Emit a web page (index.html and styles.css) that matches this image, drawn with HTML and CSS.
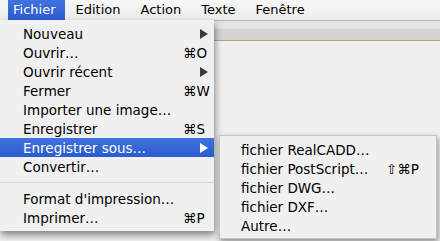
FILE: index.html
```html
<!DOCTYPE html>
<html lang="fr">
<head>
    <meta charset="UTF-8">
    <title>Fichier</title>
    <link rel="stylesheet" href="styles.css">
</head>
<body>
    <div class="menubar">
        <span class="title open">Fichier</span>
        <span class="title">Edition</span>
        <span class="title">Action</span>
        <span class="title">Texte</span>
        <span class="title">Fenêtre</span>
    </div>

    <div class="window">
        <div class="window-bar"></div>
        <div class="window-body"></div>
    </div>

    <div class="menu">
        <div class="item"><span class="label">Nouveau</span><span class="key arrow"><svg width="8" height="10" viewBox="0 0 8 10"><polygon points="0,0 8,5 0,10"/></svg></span></div>
        <div class="item"><span class="label">Ouvrir…</span><span class="key">⌘O</span></div>
        <div class="item"><span class="label">Ouvrir récent</span><span class="key arrow"><svg width="8" height="10" viewBox="0 0 8 10"><polygon points="0,0 8,5 0,10"/></svg></span></div>
        <div class="item"><span class="label">Fermer</span><span class="key">⌘W</span></div>
        <div class="item"><span class="label">Importer une image…</span><span class="key"></span></div>
        <div class="item"><span class="label">Enregistrer</span><span class="key">⌘S</span></div>
        <div class="item active"><span class="label">Enregistrer sous…</span><span class="key arrow"><svg width="8" height="10" viewBox="0 0 8 10"><polygon points="0,0 8,5 0,10"/></svg></span></div>
        <div class="item"><span class="label">Convertir…</span><span class="key"></span></div>
        <div class="sep"></div>
        <div class="item"><span class="label">Format d'impression…</span><span class="key"></span></div>
        <div class="item"><span class="label">Imprimer…</span><span class="key">⌘P</span></div>
    </div>

    <div class="menu submenu">
        <div class="item"><span class="label">fichier RealCADD…</span><span class="key"></span></div>
        <div class="item"><span class="label">fichier PostScript…</span><span class="key">⇧⌘P</span></div>
        <div class="item"><span class="label">fichier DWG…</span><span class="key"></span></div>
        <div class="item"><span class="label">fichier DXF…</span><span class="key"></span></div>
        <div class="item"><span class="label">Autre…</span><span class="key"></span></div>
    </div>
</body>
</html>
```

FILE: styles.css
```css
body {
    margin: 0;
    width: 440px;
    height: 241px;
    overflow: hidden;
    position: relative;
    background-color: #efefef;
    font-family: "DejaVu Sans", sans-serif;
    font-size: 13.5px;
    color: #000;
}

.menubar {
    height: 20px;
    display: flex;
    padding-left: 8px;
    font-size: 13px;
    background: linear-gradient(#f7f7f7, #ececec);
}

.title {
    padding: 0 9px 0 5px;
    margin-right: 6px;
    line-height: 20px;
}

.title.open {
    background: linear-gradient(#3f73dd, #2a5bcf);
    color: #fff;
}

.window {
    margin-left: 214px;
}

.window-bar {
    height: 19px;
    border-top: 1px solid #adadbd;
    border-bottom: 1px solid #bea27a;
    background: linear-gradient(#e3e3e3 0, #e3e3e3 40%, #d3d3d3 40%, #d3d3d3 100%);
}

.window-body {
    height: 200px;
    background-color: #efefef;
}

.menu {
    position: absolute;
    top: 20px;
    left: 0;
    width: 214px;
    padding: 4px 0;
    background-color: #f0f0f0;
    box-shadow: 1px 4px 7px rgba(0, 0, 0, 0.45);
}

.item {
    display: flex;
    align-items: center;
    height: 19px;
    padding: 0 6px 0 23px;
}

.item .label {
    flex: 1;
    white-space: nowrap;
}

.item .key {
    width: 25px;
    white-space: nowrap;
}

.item .arrow {
    display: flex;
    justify-content: flex-end;
}

.arrow svg {
    fill: #3a3a3a;
}

.item.active {
    background: linear-gradient(#3f73dd, #2a5bcf);
    color: #fff;
}

.item.active .arrow svg {
    fill: #fff;
}

.sep {
    height: 1px;
    margin: 6px 0;
    background-color: #d6d6d6;
}

.submenu {
    top: 135px;
    left: 219px;
    width: 216px;
    padding: 4px 0 3px;
    border: 1px solid #c4c4c4;
    box-shadow: 1px 3px 6px rgba(0, 0, 0, 0.4);
}

.submenu .item {
    padding-left: 21px;
}

.submenu .item .key {
    width: 44px;
}
```
